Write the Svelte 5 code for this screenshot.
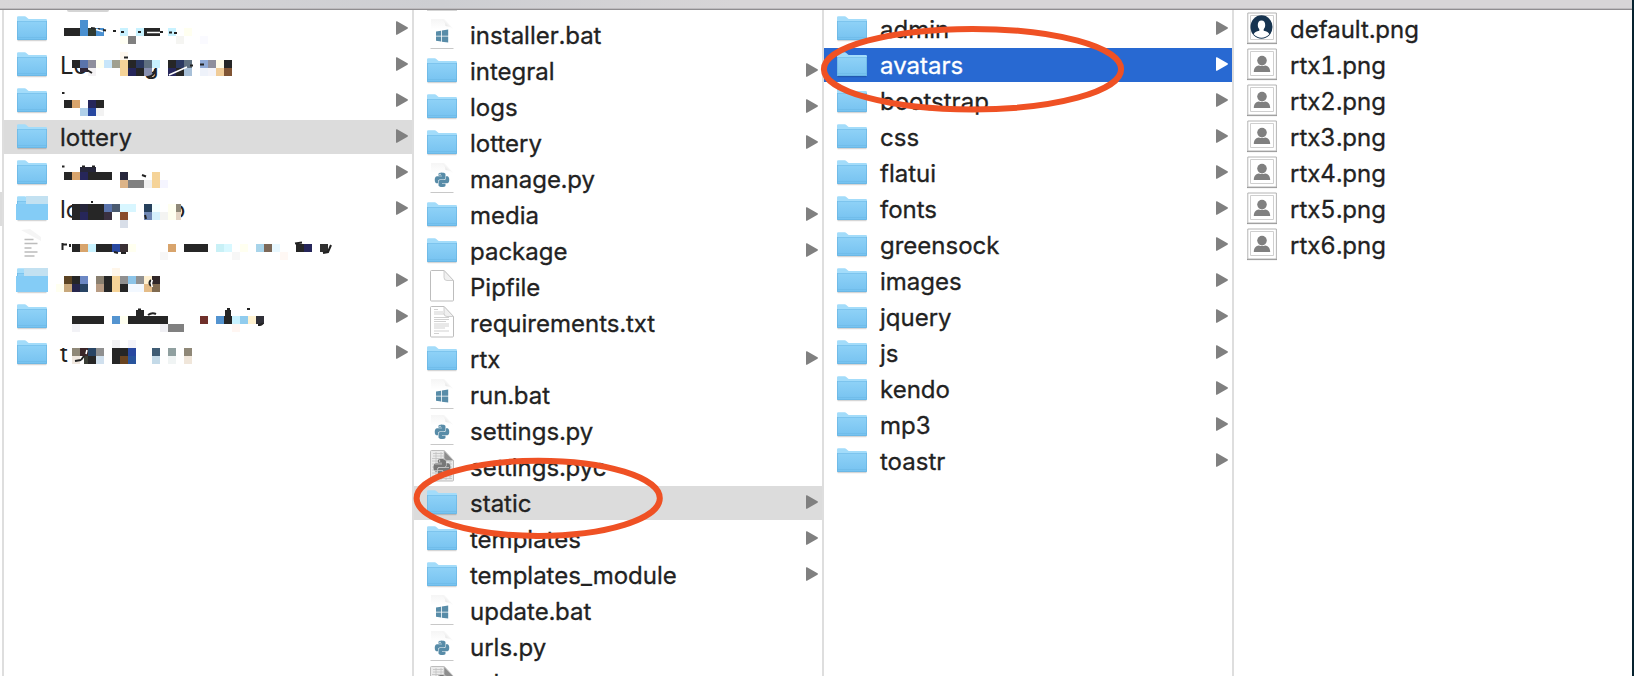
<script>
  const K = '#262626';
  const N = '#26265a';
  const T = '#d8a46c';
  const C = '#c8f2ff';
  const Y = '#f5d398';
  const I = '#fffff0';
  // Obscured names: blocks are [x, y, width, colour] on an 8px grid
  const first = [
    { kind: 'folder', y: 12, arrow: true, blocks: [
      [80,20,8,'#4a90d0'],[64,28,16,K],[80,28,8,'#4a90d0'],[88,28,8,'#2f3a32'],[96,28,8,'#4a90d0'],[120,28,8,C],[136,28,8,C],[144,28,16,K],[168,28,8,C],[184,28,8,I],
      [120,36,8,'#fffff4'],[128,36,8,'#808080'],[176,36,8,'#f5f5f2'],[200,36,8,'#fafaff']],
      marks: 'M91 28l4 .5M98 29l2 .5M103 30l3 .5M113 31h3M121 32h3M138 32h3M160 32h3M169 32.5h3M174 33h3', light: 'M96 29.500l7 2M147 32.500h13' },
    { kind: 'folder', y: 48, arrow: true, text: [['Lo', 60, 74], ['g', 144, 74]], blocks: [
      [120,52,8,'#fff8ee'],[72,60,8,K],[80,60,8,'#5a74ac'],[88,60,8,'#8f8f9c'],[96,60,8,I],[104,60,8,'#c8e6fa'],[112,60,8,'#a0a090'],[120,60,8,Y],[128,60,8,K],[136,60,8,'#2a3860'],[144,60,8,'#5f7080'],[152,60,8,C],[168,60,8,K],[176,60,8,'#2a3860'],[184,60,8,'#5f7080'],[200,60,8,'#90aad6'],[208,60,8,'#8f8f9c'],[216,60,8,'#fffbe8'],[224,60,8,K],
      [80,68,8,'#302638',4],[88,68,8,'#f4f2f4'],[120,68,8,Y],[128,68,8,N],[136,68,8,K],[144,68,8,'#8890b0'],[168,68,8,N],[176,68,8,K],[184,68,8,'#a8c0d8'],[200,68,8,'#eef2fa'],[208,68,8,'#f4f4fa'],[216,68,8,'#f0cc98'],[224,68,8,'#805434']],
      marks: 'M124 57.500h4M190 65.500h3M200 64.500h4M87 70l5 3M155 69q0 7-7 8', light: 'M169 75L187 67M193 65h5' },
    { kind: 'folder', y: 84, arrow: true, blocks: [[64,100,8,K],[72,100,8,T],[88,100,8,N],[96,100,8,K],[80,108,8,'#b0d0ea'],[88,108,8,'#2848a0'],[96,108,8,'#f2f2f2']], marks: 'M62 93h2.500' },
    { kind: 'folder', y: 120, arrow: true, name: 'lottery', selected: true },
    { kind: 'folder', y: 156, arrow: true, blocks: [[80,167,16,'#26263a',5],[64,172,8,K],[72,172,8,T],[80,172,8,N],[88,172,24,K],[120,172,8,'#26263a'],[152,172,8,Y],[120,180,8,'#dcb488'],[128,180,16,'#808080'],[144,180,8,'#f0f0f0'],[152,180,8,Y],[160,180,8,'#f5f5ff']], marks: 'M62 166.500h2.500M82 166.500h3M92 166.500h3M142 175l4 1.500' },
    { kind: 'folder', y: 192, arrow: true, faded: 10, text: [['lo', 60, 218], ['o', 171, 218]], blocks: [
      [72,204,8,K],[80,204,8,'#26263a'],[88,204,16,K],[104,204,8,'#5a74ac'],[112,204,8,'#4a5a70'],[120,204,16,'#d8f6ff'],[144,204,8,'#26405c'],[152,204,8,'#f4ffff'],[168,204,8,I],[176,204,5,'#8f8878'],
      [72,212,8,K],[80,212,8,N],[88,212,16,K],[104,212,8,'#3a3040'],[120,212,8,'#8a4c2c'],[144,212,8,'#7088b4'],[152,212,8,'#d4f0fc'],[160,212,8,'#f4f4f2'],[168,212,8,I],[176,212,5,'#e4d4c4'],[120,220,8,'#d8dee8']], marks: 'M91 202h2M145 215l1 4' },
    { kind: 'ghost', y: 228, blocks: [
      [72,244,8,K],[80,244,8,T],[88,244,8,C],[96,244,16,K],[112,244,8,'#2848a0'],[120,244,8,'#3a3034'],[128,244,8,I],[168,244,8,T],[184,244,24,K],[216,244,8,'#c8f0f6'],[224,244,8,'#d8f8ff'],[240,244,8,I],[256,244,8,'#a8d4ea'],[264,244,8,'#7c6858'],[272,244,8,'#e8f8ff'],[296,244,8,K],[304,244,8,N],[320,244,8,'#303030'],[160,252,8,'#f7f7f7'],[232,252,8,'#f7f7f7'],[280,252,8,'#fff8f4']], marks: 'M62.500 243v7M63 244.500h4M70 244v3M114 252l4 1M121 253h5M295 243.500l7-1M331 245l-3 7-5 1' },
    { kind: 'folder', y: 264, arrow: true, faded: 8, blocks: [
      [112,268,8,'#fff6ea'],[64,276,8,'#5c4424'],[72,276,8,K],[80,276,8,'#6c88c4'],[96,276,8,'#8a8070'],[104,276,8,K],[112,276,8,Y],[120,276,8,'#909090'],[128,276,8,'#8cc4e8'],[136,276,8,'#909090'],[144,276,8,'#fff0d0'],[152,276,8,'#302628'],
      [56,284,8,I],[64,284,8,'#c8a87c'],[72,284,8,'#26264c'],[80,284,8,'#284464'],[96,284,8,'#b89c84'],[104,284,8,K],[112,284,8,Y],[120,284,8,K],[128,284,16,'#f2f8ff'],[144,284,8,'#e4bc88'],[152,284,8,'#806a50']], marks: 'M151 280q-3 3 0 6', light: 'M152.500 280q-2 3 0 7' },
    { kind: 'folder', y: 300, arrow: true, blocks: [
      [136,310,8,K,6],[225,310,6,K,6],[72,316,32,K],[112,316,8,'#5494d0'],[120,316,8,I],[128,316,40,K],[200,316,8,'#70302a'],[216,316,8,'#5494d0'],[224,316,8,K],[232,316,8,C],[240,316,8,'#90ccee'],[248,316,8,'#fff2d0'],[256,316,8,'#303038'],[72,324,8,'#f2f2f6'],[160,324,8,'#f0f0f4'],[168,324,16,'#808080'],[232,324,8,'#fff6f2']], marks: 'M148 315q4-3 8-1M138 309.500h3M227 309h3M247 309h3M258 325q4 0 5-2' },
    { kind: 'folder', y: 336, arrow: true, text: [['t', 60, 362]], blocks: [
      [112,340,8,'#f2f2f4'],[128,340,8,'#f4f4fa'],[60,340,9,'#fff'],[72,348,8,'#8f8878'],[80,348,8,'#3a2628'],[88,348,8,'#284464'],[96,348,8,'#909090'],[112,348,16,K],[128,348,8,'#2848a0'],[152,348,8,'#3f5c74'],[168,348,8,'#90a0a0'],[184,348,8,'#8f8878'],[72,356,8,'#f0e8e0'],[84,356,4,'#3b3e36'],[88,356,8,K],[96,356,8,'#d0e0ee'],[112,356,8,K],[120,356,8,'#6a4420'],[128,356,8,'#28549c'],[152,356,8,'#c4dae8'],[168,356,8,'#f0f4f4'],[184,356,8,'#f0e6da']], marks: 'M75 361l6-1M84 356l-3 4', light: 'M87 350l-1 4' }
  ];
  const dir = (name, selected = false) => ({ kind: 'folder', name, arrow: true, selected });
  const file = (kind, name) => ({ kind, name });
  const second = [
    file('bat', 'installer.bat'), dir('integral'), dir('logs'), dir('lottery'), file('py', 'manage.py'),
    dir('media'), dir('package'), file('blank', 'Pipfile'), file('txt', 'requirements.txt'), dir('rtx'),
    file('bat', 'run.bat'), file('py', 'settings.py'), file('pyc', 'settings.pyc'), dir('static', true),
    dir('templates'), dir('templates_module'), file('bat', 'update.bat'), file('py', 'urls.py'), file('pyc', 'urls.pyc')
  ];
  const third = ['admin', 'avatars', 'bootstrap', 'css', 'flatui', 'fonts', 'greensock', 'images', 'jquery', 'js', 'kendo', 'mp3', 'toastr']
    .map((n) => ({ ...dir(n, n === 'avatars'), active: n === 'avatars' }));
  const fourth = [file('default', 'default.png'), ...[1, 2, 3, 4, 5, 6].map((n) => file('person', `rtx${n}.png`))];
  const columns = [first, second, third, fourth];
  const snake = 'M14.25.18l.9.2.73.26.59.3.45.32.34.34.25.34.16.33.1.3.04.26.02.2-.01.13V8.5l-.05.63-.13.55-.21.46-.26.38-.3.31-.33.25-.35.19-.35.14-.33.1-.3.07-.26.04-.21.02H8.77l-.69.05-.59.14-.5.22-.41.27-.33.32-.27.35-.2.36-.15.37-.1.35-.07.32-.04.27-.02.21v3.06H3.17l-.21-.03-.28-.07-.32-.12-.35-.18-.36-.26-.36-.36-.35-.46-.32-.59-.28-.73-.21-.88-.14-1.05-.05-1.23.06-1.22.16-1.04.24-.87.32-.71.36-.57.4-.44.42-.33.42-.24.4-.16.36-.1.32-.05.24-.01h.16l.06.01h8.16v-.83H6.18l-.01-2.75-.02-.37.05-.34.11-.31.17-.28.25-.26.31-.23.38-.2.44-.18.51-.15.58-.12.64-.1.71-.06.77-.04.84-.02 1.27.05zm-6.3 1.98l-.23.33-.08.41.08.41.23.34.33.22.41.09.41-.09.33-.22.23-.34.08-.41-.08-.41-.23-.33-.33-.22-.41-.09-.41.09zm13.09 3.95l.28.06.32.12.35.18.36.27.36.35.35.47.32.59.28.73.21.88.14 1.04.05 1.23-.06 1.23-.16 1.04-.24.86-.32.71-.36.57-.4.45-.42.33-.42.24-.4.16-.36.09-.32.05-.24.02-.16-.01h-8.22v.82h5.84l.01 2.76.02.36-.05.34-.11.31-.17.29-.25.25-.31.24-.38.2-.44.17-.51.15-.58.13-.64.09-.71.07-.77.04-.84.01-1.27-.04-1.07-.14-.9-.2-.73-.25-.59-.3-.45-.33-.34-.34-.25-.34-.16-.33-.1-.3-.04-.25-.02-.2.01-.13v-5.34l.05-.64.13-.54.21-.46.26-.38.3-.32.33-.24.35-.2.35-.14.33-.1.3-.06.26-.04.21-.02.13-.01h5.84l.69-.05.59-.14.5-.21.41-.28.33-.32.27-.35.2-.36.15-.36.1-.35.07-.32.04-.28.02-.21V6.07h2.09l.14.01z';
</script>

<svg class="defs" aria-hidden="true">
  <defs>
    <linearGradient id="folder" x2="0" y2="1"><stop stop-color="#8fd2f7" /><stop offset="1" stop-color="#76c2f0" /></linearGradient>
    <linearGradient id="curl" x1="0" y1="1" x2="1" y2="0"><stop stop-color="#d2d2d2" /><stop offset=".6" stop-color="#fafafa" /></linearGradient>
    <linearGradient id="page" x2="0" y2="1"><stop stop-color="#f2f2f2" /><stop offset=".35" stop-color="#fff" /></linearGradient>
  </defs>
</svg>

{#snippet icon(row)}
  <svg class="icon" width="44" height="34" viewBox="0 0 44 34">
    {#if row.kind === 'folder'}
      <path d="M1.500 28.700h29" stroke="#000" stroke-opacity=".2" />
      <path d="M1 27V5.500q0-1.200 1.200-1.200h6.600q.8 0 1.500.7l1.700 1.600q.6.500 1.500.5h16.300q1.200 0 1.200 1.200V27q0 1-1 1H2q-1 0-1-1z" fill="#a3dcfa" />
      <path d="M1 9h30v18q0 1-1 1H2q-1 0-1-1z" fill="url(#folder)" />
      <path d="M1.500 9V27.500h29V9" fill="none" stroke="#63b0de" stroke-width=".8" opacity=".7" />
      <path d="M1.500 9.500h29M1.500 25.500h29" stroke="#68b5e2" stroke-width=".8" opacity=".55" />
      {#if row.faded}
        <path d="M0 12h32v16H0z" fill="#84ccf6" />
        <path d={`M${row.faded} 4h${32 - row.faded}v8H${row.faded}z`} fill="#c3e1f1" />
      {/if}
    {:else if row.kind === 'ghost'}
      <path d="M5 2l9-1 11 8v4z" fill="#f5f5f5" />
      <path d="M8.500 11.500h9M8.500 15.500h13M8.500 20h7M8.500 24h13M8.500 28h10" stroke="#bcbcbc" stroke-width="1.600" />
    {:else if row.kind === 'bat' || row.kind === 'py'}
      <path d="M5 1h13l9 9v21H5z" fill="url(#page)" opacity=".75" />
      <path d="M16 1q3 2 3.500 7 6 .5 7.500 3L18 1z" fill="url(#curl)" />
      <path d="M4.500 30.500h23" stroke="#c8c8c8" />
      {#if row.kind === 'bat'}
        <path d="M10 13.500l5-.8v5h-5zM15.800 12.500l6.400-.9v6.100h-6.400zM10 18.500h5v5l-5-.8zM15.800 18.500h6.400v6.100l-6.400-.9z" fill="#588ca8" />
      {:else}
        <path transform="translate(8.800 10.600) scale(.6)" d={snake} fill="#588ca8" />
      {/if}
    {:else if row.kind === 'blank' || row.kind === 'txt' || row.kind === 'pyc'}
      <path d="M4.500 1.500q0-1 1-1H18l9.500 10v19.500q0 1-1 1h-21q-1 0-1-1z" fill={row.kind === 'pyc' ? '#ebebeb' : '#fff'} stroke="#bdbdbd" />
      {#if row.kind === 'txt'}
        <path d="M8 3.500h4M8 6h9M8 8h10M8 11.500h15M8 13.500h15M8 15.500h12M8 18h15M8 20h15M8 22h11M8 25h15M8 27.500h5" stroke="#c5c5c5" stroke-width=".8" />
      {:else if row.kind === 'pyc'}
        <path d="M7 3.500h10M7 6h11M6 8.500h13M6 11h20M6 14h20M6 17h20M6 20h20M6 23h20M6 26h20M6 28.500h20M10 2v28M15 2v28M20 9v21M24 10v19" stroke="#c2c2c2" stroke-width=".8" />
        <path transform="translate(7.500 9) scale(.7)" d={snake} fill="#777" />
        <path d="M9 14h7M12 17.500h11M8 20.500h9M14 23.500h8" stroke="#c8c8c8" stroke-width=".8" />
      {/if}
      <path d="M18 .5v7q0 3 3 3h6.500z" fill={row.kind === 'pyc' ? '#8d8d8d' : '#f0f0f0'} stroke="#c4c4c4" stroke-width=".8" />
    {:else}
      <path d="M1 31.500h30" stroke="#999" stroke-width="1.200" />
      <path d="M1.800 1h28.600v30H1.800z" fill="#fff" stroke="#ababab" stroke-width=".9" />
      <path d="M4.500 3.500h23v24h-23z" fill="#fff" stroke="#cfcfcf" />
      {#if row.kind === 'default'}
        <ellipse cx="15.500" cy="15" rx="11" ry="11.800" fill="#173450" />
        <path d="M15.500 8.500c-2.600 0-3.700 1.800-3.700 4.500 0 1.800.6 3.200 1.500 4.200v1.500c-3 .5-5 1.500-5.600 3.600A11 11.500 0 0 0 23.300 22.300c-.6-2.100-2.600-3.100-5.600-3.600v-1.500c.9-1 1.500-2.400 1.500-4.200C19.200 10.300 18.100 8.500 15.500 8.500z" fill="#fff" />
      {:else}
        <path d="M7.800 24c0-4.500 2.500-6.400 5-6.600q3.200 1.300 6.400 0c2.500.2 5 2.100 5 6.600z" fill="#808080" />
        <circle cx="16" cy="12.600" r="4.800" fill="#808080" />
      {/if}
    {/if}
  </svg>
{/snippet}

<main class="window">
  <header></header>
  <div class="browser">
    <span class="outside"></span>
    {#each columns as column, c}
      <section class="column" class:offset={c === 1}>
        {#if c < 2}<i class="peek" class:round={c === 0}></i>{/if}
        {#each column as row}
          <div class="row" class:selected={row.selected} class:active={row.active}>
            {@render icon(row)}
            {#if row.name}
              <span class="name">{row.name}</span>
            {:else}
              <svg class="hidden-name" width="336" height="34" viewBox={`60 ${row.y} 336 34`}>
                {#each row.text ?? [] as [t, x, y]}<text {x} {y}>{t}</text>{/each}
                {#each row.blocks as [x, y, w, fill, h]}<rect {x} {y} width={w} height={h ?? 8} {fill} />{/each}
                {#if row.marks}<path d={row.marks} fill="none" stroke="#222" stroke-width="2" />{/if}
                {#if row.light}<path d={row.light} fill="none" stroke="#fff" stroke-width="1.500" />{/if}
              </svg>
            {/if}
            {#if row.arrow}
              <svg class="arrow" width="12" height="14" viewBox="0 0 12 14"><path d="M0 .8Q0-.2 1 .3L11.500 6.300q.9.700 0 1.400L1 13.700q-1 .5-1-.5z" /></svg>
            {/if}
          </div>
        {/each}
      </section>
    {/each}
  </div>
  <svg class="rings" width="1634" height="676" viewBox="0 0 1634 676">
    <ellipse cx="538.200" cy="498.300" rx="121.600" ry="37.600" />
    <ellipse cx="972.500" cy="69.200" rx="148.600" ry="40.300" />
  </svg>
</main>

<style>
  :global(body) { margin: 0; background: #fff; }
  .defs { position: absolute; width: 0; height: 0; }
  .window { position: relative; display: flex; flex-direction: column; box-sizing: border-box; width: 1634px; height: 676px; overflow: hidden; border-right: 2px solid #06222e; background: #fff; font: 24px/34px Inter, "Liberation Sans", sans-serif; color: #222; }
  header { flex: none; box-sizing: border-box; height: 10px; border-bottom: 1px solid #8f8d90; background: linear-gradient(90deg, #d8d6d8, #cdced2 27%, #d7d5d7 45%, #d7d5d7); box-shadow: inset 0 -1px #bdbbbe; }
  .browser { display: flex; flex: 1; min-height: 0; }
  .outside { flex: none; width: 2px; height: 34px; margin-top: 182px; background: #dcdcdc; }
  .column { position: relative; display: flex; flex: none; flex-direction: column; gap: 2px; box-sizing: border-box; width: 410px; padding-top: 2px; border-left: 2px solid #dedede; }
  .column.offset { padding-top: 8px; }
  .row { display: flex; flex: none; align-items: center; box-sizing: border-box; height: 34px; padding: 0 4px 0 12px; }
  .selected { background: #dcdcdc; }
  .active { background: #2869d2; color: #fff; }
  .icon { flex: none; }
  .name { flex: 1; padding-top: 2px; white-space: nowrap; font-variant-numeric: tabular-nums; -webkit-text-stroke: .3px currentColor; }
  .hidden-name { flex: none; overflow: visible; fill: #222; }
  .arrow { flex: none; margin: -2px 0 0 auto; fill: #808080; }
  .active .arrow { fill: #fff; }
  .peek { position: absolute; top: 0; left: 13px; width: 30px; height: 1px; background: #d5d5d5; }
  .peek.round { left: 63px; width: 42px; height: 2px; border-radius: 0 0 20px 20px; }
  .rings { position: absolute; inset: 0; fill: none; stroke: #ef5124; stroke-width: 6; }
</style>
